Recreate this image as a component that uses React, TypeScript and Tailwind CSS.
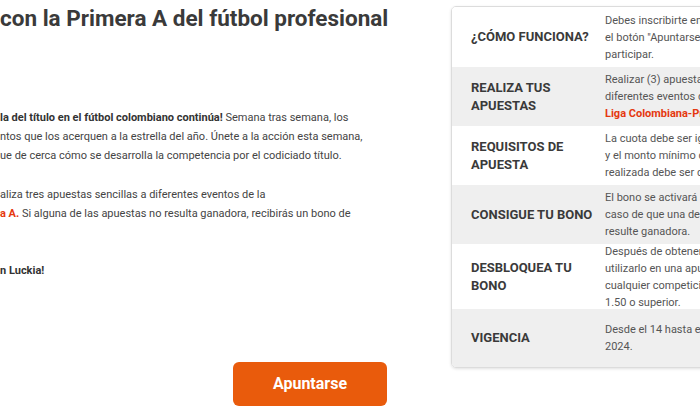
const rows = [
  {
    label: '¿CÓMO FUNCIONA?',
    lines: ['Debes inscribirte en la promoción con', 'el botón "Apuntarse" para poder', 'participar.'],
    bg: 'bg-white',
    h: 'h-[60px]',
  },
  {
    label: 'REALIZA TUS APUESTAS',
    lines: ['Realizar (3) apuestas sencillas a', 'diferentes eventos de la'],
    red: 'Liga Colombiana-Primera A.',
    bg: 'bg-[#efefef]',
    h: 'h-[59px]',
  },
  {
    label: 'REQUISITOS DE APUESTA',
    lines: ['La cuota debe ser igual o superior a 1.50', 'y el monto mínimo de cada apuesta', 'realizada debe ser de $10.000.'],
    bg: 'bg-white',
    h: 'h-[59px]',
  },
  {
    label: 'CONSIGUE TU BONO',
    lines: ['El bono se activará automáticamente en', 'caso de que una de las apuestas no', 'resulte ganadora.'],
    bg: 'bg-[#efefef]',
    h: 'h-[59px]',
  },
  {
    label: 'DESBLOQUEA TU BONO',
    lines: ['Después de obtener el bono, deberás', 'utilizarlo en una apuesta sencilla en', 'cualquier competición con cuota de', '1.50 o superior.'],
    bg: 'bg-white',
    h: 'h-[65px]',
  },
  {
    label: 'VIGENCIA',
    lines: ['Desde el 14 hasta el 21 de noviembre de', '2024.'],
    bg: 'bg-[#efefef]',
    h: 'h-[58px]',
  },
];

export default function App() {
  return (
    <div className="flex h-[414px] w-[700px] overflow-hidden bg-white font-['Roboto',sans-serif] text-[#333]">
      <div className="flex w-[451px] shrink-0 flex-col overflow-hidden">
        <h1 className="mt-[4px] whitespace-nowrap text-[22.5px] font-bold leading-[28px] text-[#3a3a3a]">
          con la Primera A del fútbol profesional
        </h1>

        <div className="mt-[76px] whitespace-nowrap text-[11px] leading-[19px] text-[#444]">
          <p>
            <b className="text-[#333]">la del título en el fútbol colombiano continúa!</b> Semana tras semana, los
          </p>
          <p>ntos que los acerquen a la estrella del año. Únete a la acción esta semana,</p>
          <p>ue de cerca cómo se desarrolla la competencia por el codiciado título.</p>
          <p className="mt-[20px]">aliza tres apuestas sencillas a diferentes eventos de la</p>
          <p>
            <b className="text-[#e5380f]">a A.</b> Si alguna de las apuestas no resulta ganadora, recibirás un bono de
          </p>
          <p className="mt-[38px] font-bold text-[#333]">n Luckia!</p>
        </div>

        <button
          type="button"
          className="ml-[233px] mt-[82px] flex h-[44px] w-[154px] items-center justify-center rounded-[6px] bg-[#e95b0c] text-[16px] font-bold text-white"
        >
          Apuntarse
        </button>
      </div>

      <div className="pt-[6px]">
        <div className="w-[330px] overflow-hidden rounded-[5px] border border-[#dcdcdc] shadow-[0_1px_3px_rgba(0,0,0,0.12)]">
          {rows.map((row) => (
            <div key={row.label} className={`flex items-center ${row.bg} ${row.h}`}>
              <div className="w-[153px] shrink-0 pl-[19px] pr-[6px] text-[13px] font-bold leading-[18px] text-[#3a3a3a]">
                {row.label}
              </div>
              <div className="whitespace-nowrap text-[11px] leading-[17px] text-[#555]">
                {row.lines.map((l) => (
                  <div key={l}>{l}</div>
                ))}
                {row.red && <div className="font-bold text-[#e5380f]">{row.red}</div>}
              </div>
            </div>
          ))}
        </div>
      </div>
    </div>
  );
}
